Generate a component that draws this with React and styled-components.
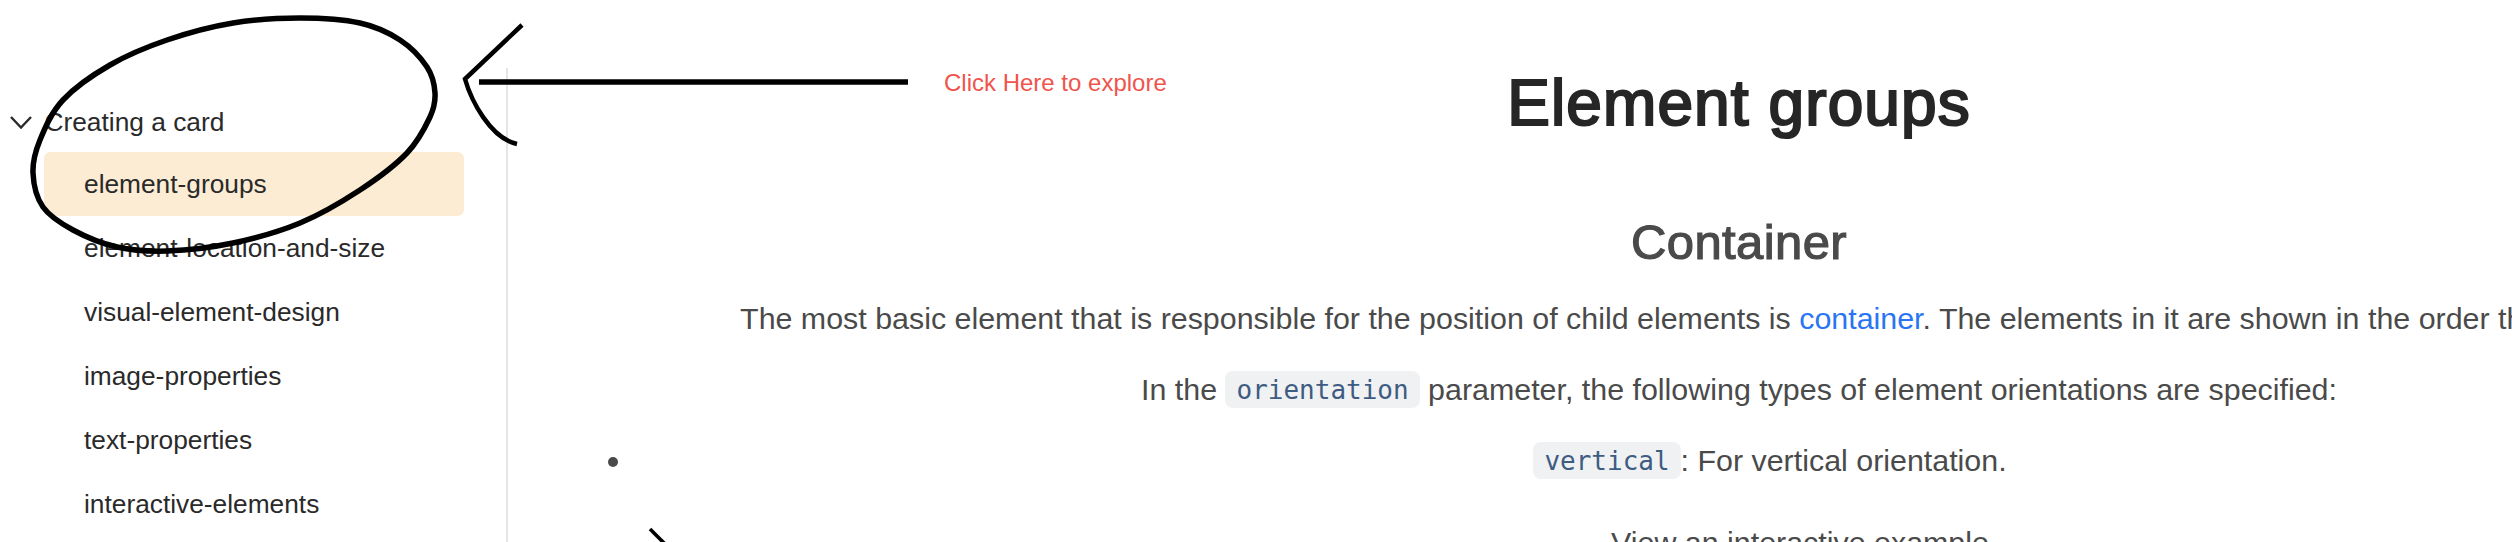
import React from "react";
import styled, { createGlobalStyle } from "styled-components";

const items = [
  "element-groups",
  "element-location-and-size",
  "visual-element-design",
  "image-properties",
  "text-properties",
  "interactive-elements",
];

// hand drawn ring around the first nav item
const ringPoints = [
  [300, 18], [233, 23], [167, 40], [110, 65], [63, 100], [40, 140], [33, 173],
  [43, 207], [73, 230], [117, 247], [167, 251], [233, 243], [300, 223],
  [360, 190], [407, 153], [430, 117], [435, 93], [427, 67], [400, 40], [360, 23],
];

const smoothLoop = (pts) => {
  const n = pts.length;
  let d = `M${pts[0][0]} ${pts[0][1]}`;
  for (let i = 0; i < n; i++) {
    const p0 = pts[(i - 1 + n) % n];
    const p1 = pts[i];
    const p2 = pts[(i + 1) % n];
    const p3 = pts[(i + 2) % n];
    const c1x = p1[0] + (p2[0] - p0[0]) / 6;
    const c1y = p1[1] + (p2[1] - p0[1]) / 6;
    const c2x = p2[0] - (p3[0] - p1[0]) / 6;
    const c2y = p2[1] - (p3[1] - p1[1]) / 6;
    d += ` C${c1x} ${c1y} ${c2x} ${c2y} ${p2[0]} ${p2[1]}`;
  }
  return d + " Z";
};

const App = () => {
  return (
    <Page>
      <GlobalStyle />
      <Sidebar>
        <Category>
          <ChevronIcon width="22" height="13" viewBox="0 0 22 13">
            <polyline points="1,1 11,11.5 21,1" />
          </ChevronIcon>
          Creating a card
        </Category>
        {items.map((item, i) => (
          <NavItem key={item} $active={i === 0}>{item}</NavItem>
        ))}
      </Sidebar>
      <Main>
        <Title>Element groups</Title>
        <Subtitle>Container</Subtitle>
        <Text>
          The most basic element that is responsible for the position of child elements is <Link>container</Link>. The elements in it are shown in the order they are selected.
        </Text>
        <Text>
          In the <Code>orientation</Code> parameter, the following types of element orientations are specified:
        </Text>
        <List>
          <Bullet>
            <Code>vertical</Code>: For vertical orientation.
          </Bullet>
          <Details>
            <SummaryIcon width="34" height="34" viewBox="0 0 34 34">
              <polyline points="2,2 32,32" />
            </SummaryIcon>
            View an interactive example
          </Details>
        </List>
      </Main>
      <Annotation width="1000" height="260" viewBox="0 0 1000 260">
        <path d={smoothLoop(ringPoints)} />
        <ArrowHead d="M522 25 L465 79 C471 100 490 138 517 144" />
        <line x1="479" y1="82" x2="908" y2="82" />
      </Annotation>
      <Note>Click Here to explore</Note>
    </Page>
  );
};

const GlobalStyle = createGlobalStyle`
  html, body {
    margin: 0;
    padding: 0;
    background: #fff;
  }
`;

const Page = styled.div`
  position: relative;
  display: flex;
  align-items: flex-start;
  width: 2512px;
  height: 542px;
  overflow: hidden;
  background: #fff;
  font-family: "Liberation Sans", Arial, sans-serif;
`;

const Sidebar = styled.aside`
  flex: none;
  box-sizing: border-box;
  width: 508px;
  height: 474px;
  margin-top: 68px;
  padding: 24px 42px 0 0;
  border-right: 2px solid #e5e5e5;
  font-size: 26.3px;
  color: #2a2a2a;
`;

const Category = styled.div`
  display: flex;
  align-items: center;
  gap: 13px;
  height: 60px;
  padding-left: 9.5px;
`;

const ChevronIcon = styled.svg`
  flex: none;
  fill: none;
  stroke: #2a2a2a;
  stroke-width: 2.4;
`;

const NavItem = styled.div`
  height: 64px;
  line-height: 64px;
  margin-left: 44px;
  padding-left: 40px;
  border-radius: 6px;
  background: ${(props) => (props.$active ? "#fcecd4" : "transparent")};
`;

const Main = styled.main`
  flex: none;
  box-sizing: border-box;
  width: 2330px;
  margin-left: 66px;
  text-align: center;
  color: #4a4a4a;
  font-size: 30.4px;
  line-height: 44px;
`;

const Title = styled.h1`
  margin: 67px 0 0;
  font-size: 64px;
  line-height: 72px;
  font-weight: 400;
  letter-spacing: 1.1px;
  -webkit-text-stroke: 2.2px #262626;
  color: #262626;
`;

const Subtitle = styled.h2`
  margin: 73px 0 0;
  font-size: 49px;
  line-height: 60px;
  font-weight: 400;
  letter-spacing: 0.4px;
  -webkit-text-stroke: 1.2px #4a4a4a;
  color: #4a4a4a;
`;

const Text = styled.p`
  margin: 24px 0 0;
  white-space: nowrap;
  & + & {
    margin-top: 27px;
  }
`;

const Link = styled.span`
  color: #2a75f3;
`;

const Code = styled.code`
  padding: 3.5px 11px;
  border-radius: 8px;
  background: #eff1f3;
  color: #3e5c82;
  font-family: "DejaVu Sans Mono", monospace;
  font-size: 26px;
  line-height: 1;
  vertical-align: 1.5px;
`;

const List = styled.ul`
  margin: 27px 0 0;
  padding: 0 0 0 62px;
  list-style: none;
`;

const Bullet = styled.li`
  position: relative;
  &::before {
    content: "";
    position: absolute;
    top: 19px;
    left: -28px;
    width: 10px;
    height: 10px;
    border-radius: 50%;
    background: #4a4a4a;
  }
`;

const Details = styled.li`
  position: relative;
  margin: 38px 0 0 60px;
`;

const SummaryIcon = styled.svg`
  position: absolute;
  top: 7px;
  left: -48px;
  fill: none;
  stroke: #000;
  stroke-width: 3.6;
`;

const Annotation = styled.svg`
  position: absolute;
  top: 0;
  left: 0;
  fill: none;
  stroke: #000;
  stroke-width: 5.5;
  pointer-events: none;
`;

const ArrowHead = styled.path`
  stroke-width: 4.5;
`;

const Note = styled.div`
  position: absolute;
  top: 69px;
  left: 944px;
  font-size: 24px;
  line-height: 28px;
  color: #f0544c;
`;

export default App;
